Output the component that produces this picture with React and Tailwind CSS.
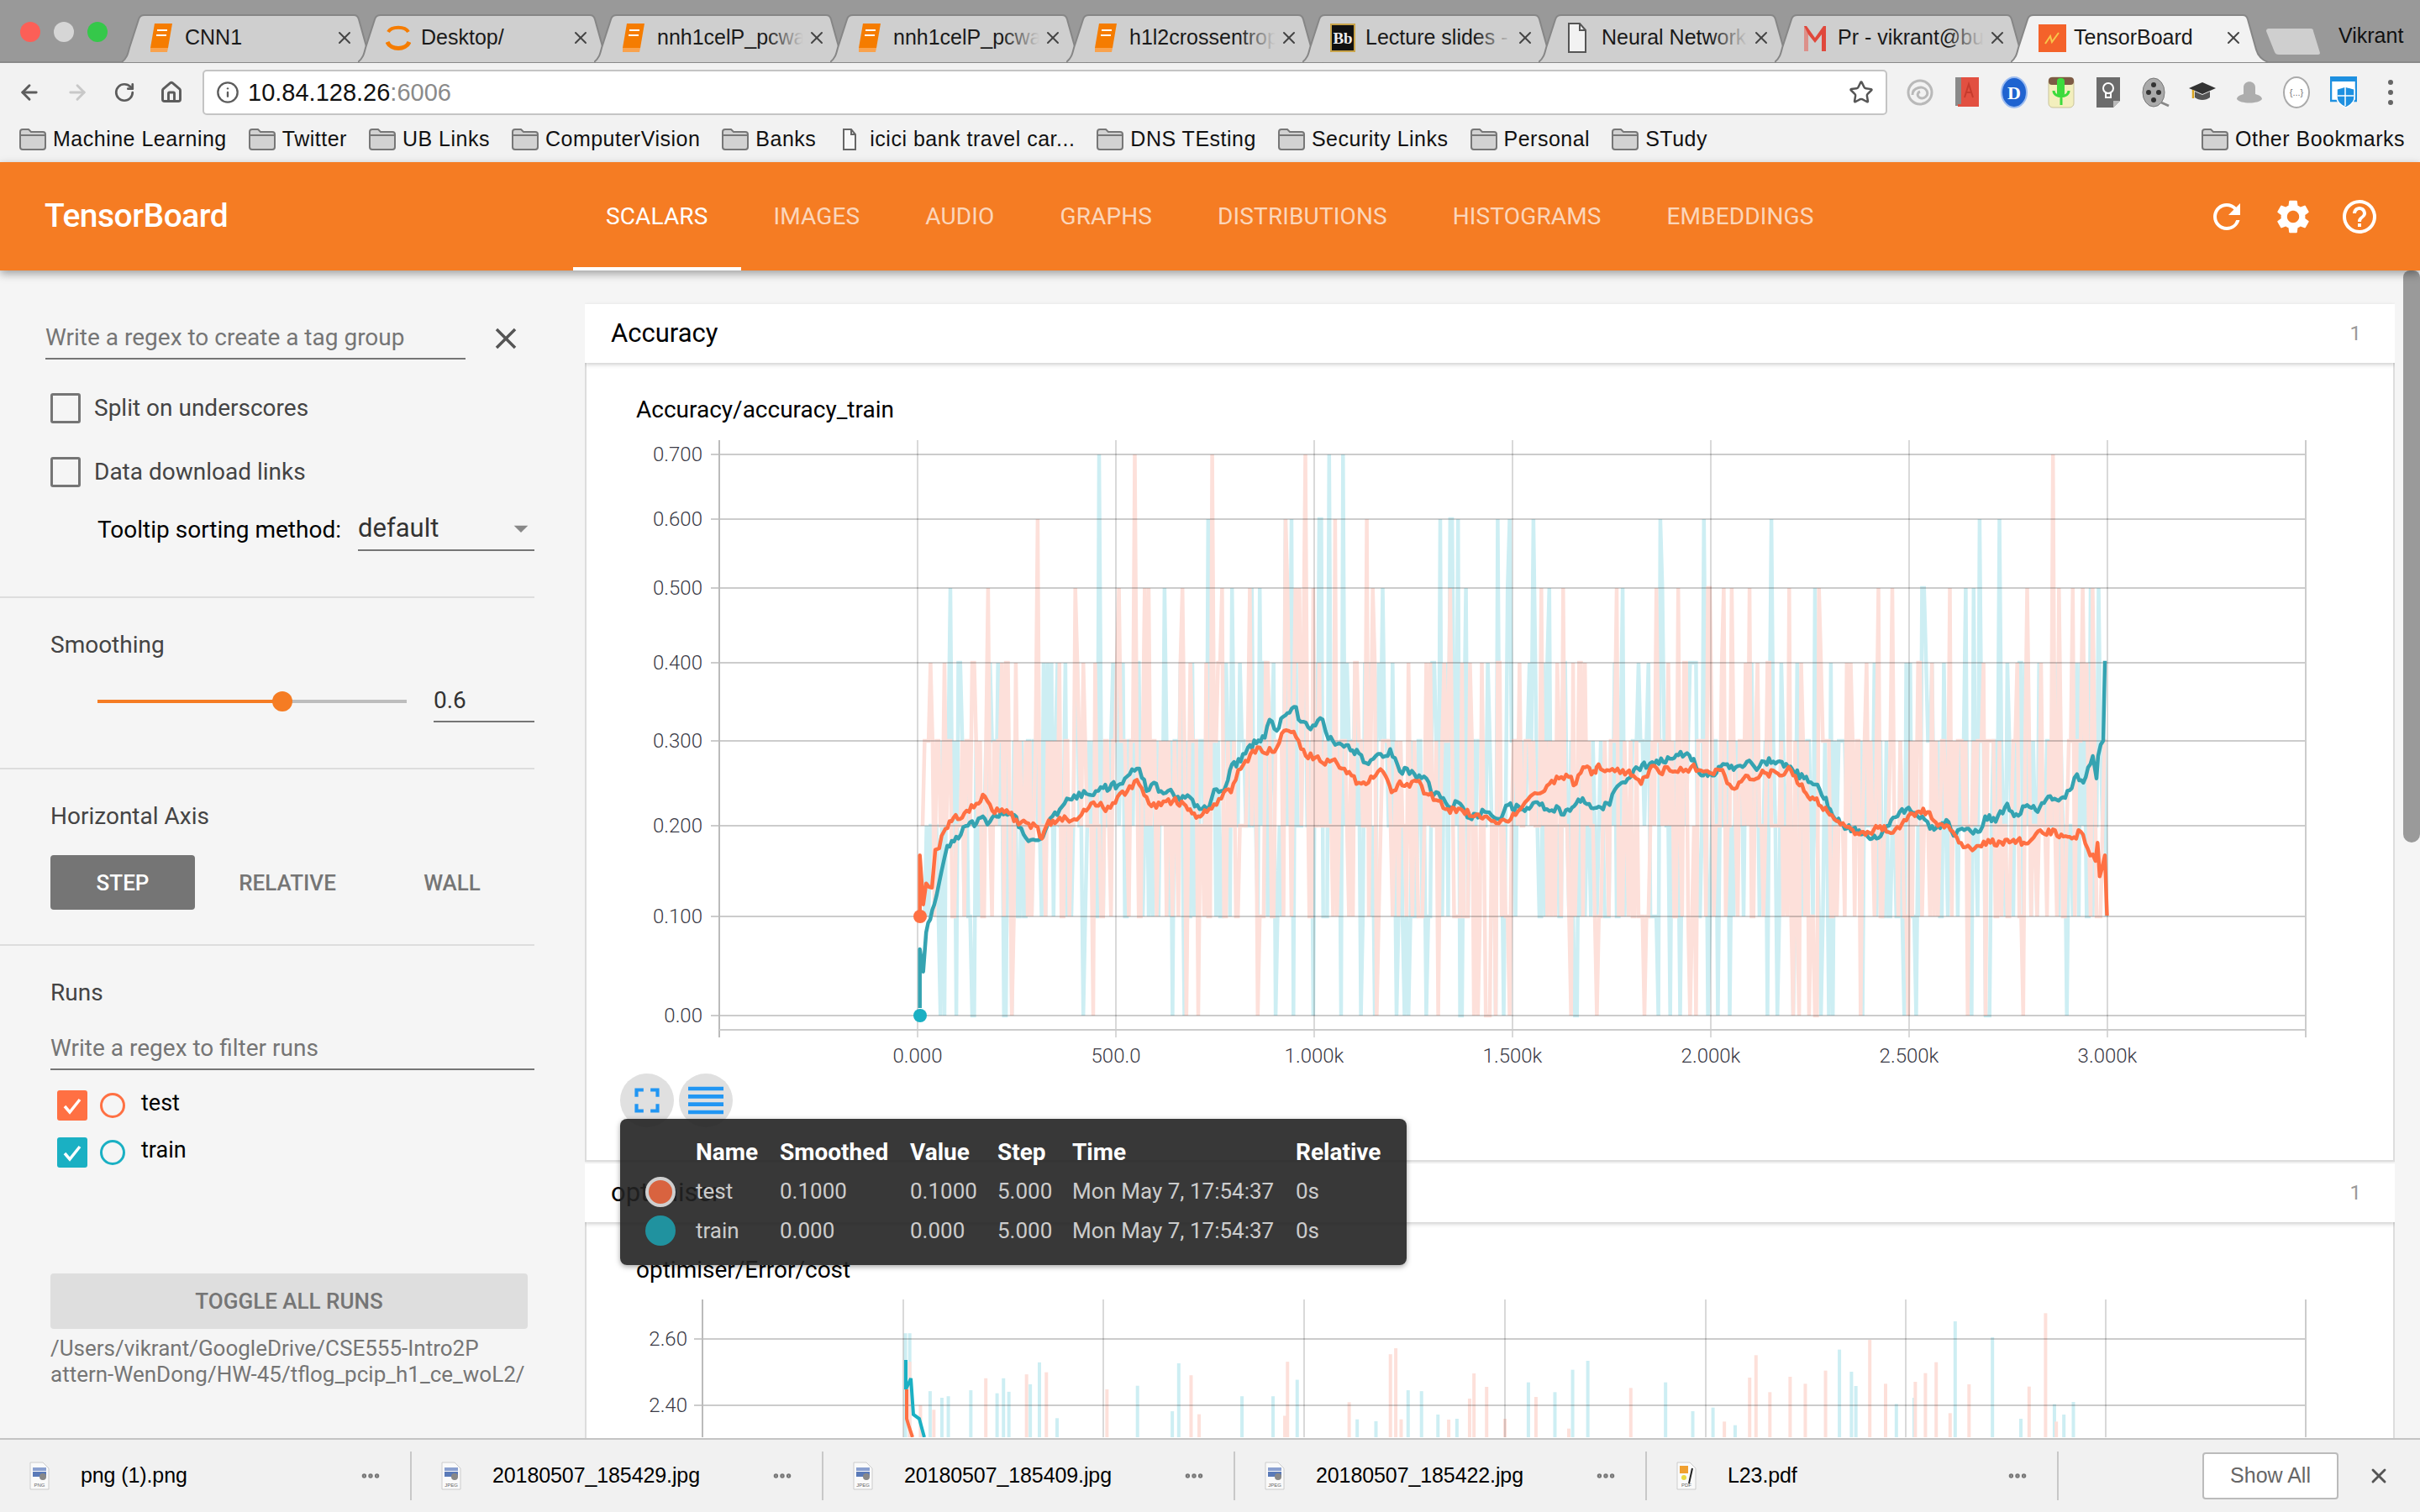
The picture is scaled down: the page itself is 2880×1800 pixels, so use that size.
import { ArrowLeft, ArrowRight, RotateCw, Home, Star, Info, X, MoreHorizontal } from 'lucide-react'
import { MdRefresh, MdSettings, MdHelpOutline, MdClose, MdFullscreen, MdReorder, MdArrowDropDown } from 'react-icons/md'

// small seeded random so the noisy chart data stays the same on each render
function seeded(seed) {
  let a = seed
  return () => {
    a |= 0; a = (a + 0x6d2b79f5) | 0
    let t = Math.imul(a ^ (a >>> 15), 1 | a)
    t = (t + Math.imul(t ^ (t >>> 7), 61 | t)) ^ t
    return ((t ^ (t >>> 14)) >>> 0) / 4294967296
  }
}

const Z6 = ([x, y]) => [1000 + x / 1.742, 700 + y / 3]
const Z7 = ([x, y]) => [1900 + x / 1.6, 700 + y / 3]

const testPts = [
  ...[[165,1170],[165,955],[172,1130],[178,1055],[190,1070],[197,935],[205,930],[210,885],[218,860],[235,820],[248,825],[262,795],[282,770],[300,745],[315,795],[335,790],[350,805],[370,845],[385,838],[405,850],[418,895],[432,830],[445,840],[465,815],[480,830],[500,810],[525,765],[545,785],[560,785],[575,745],[595,725],[610,690],[625,715],[640,770],[655,785],[670,762],[690,760],[712,770],[725,790],[742,815],[760,800],[780,775],[795,730],[810,730],[825,650],[845,620],[855,580],[870,570],[880,590],[905,570],[920,510],[935,515],[950,545],[965,600],[985,605],[1000,625],[1020,615],[1040,645],[1060,670],[1075,695],[1095,695],[1115,655],[1130,670],[1143,730],[1160,690],[1180,710],[1195,690],[1215,735],[1240,760],[1260,790],[1290,795],[1310,815],[1340,815],[1360,840],[1385,835],[1410,790],[1430,745],[1455,730],[1470,700],[1490,680],[1510,675],[1525,700],[1540,640],[1566,660]].map(Z6),
  ...[[0,640],[20,650],[35,655],[50,650],[70,670],[85,700],[105,635],[120,660],[135,640],[150,655],[165,655],[180,640],[195,650],[215,660],[235,650],[258,715],[280,680],[300,685],[320,660],[345,662],[370,650],[395,725],[415,755],[440,800],[465,845],[500,880],[520,875],[540,850],[560,875],[590,830],[610,800],[630,800],[650,850],[670,850],[690,910],[720,930],[750,910],[790,905],[825,905],[845,865],[885,880],[905,895],[922,870],[935,930],[950,975],[954,910],[958,1030],[968,955],[972,1170]].map(Z7),
]

const trainPts = [
  ...[[165,1500],[165,1290],[172,1370],[178,1230],[195,1130],[210,1010],[222,920],[245,895],[260,850],[300,825],[305,845],[320,810],[360,810],[380,880],[395,900],[420,890],[440,815],[460,780],[485,740],[510,735],[525,740],[545,715],[580,700],[600,665],[620,645],[635,725],[650,695],[665,725],[685,720],[705,760],[720,740],[745,790],[765,780],[775,720],[795,725],[812,630],[830,620],[845,570],[880,535],[890,470],[905,510],[918,460],[945,425],[950,470],[975,505],[1000,470],[1012,540],[1040,560],[1075,590],[1090,625],[1110,600],[1135,600],[1140,575],[1160,655],[1175,645],[1195,680],[1215,680],[1230,740],[1250,750],[1260,780],[1285,770],[1300,820],[1340,800],[1365,825],[1385,775],[1415,790],[1445,765],[1465,790],[1490,785],[1500,810],[1530,755],[1566,785]].map(Z6),
  ...[[0,785],[25,775],[35,720],[55,695],[75,640],[110,630],[140,610],[160,585],[185,610],[195,660],[220,670],[245,630],[265,640],[295,625],[305,650],[320,620],[345,620],[365,640],[395,680],[425,720],[445,790],[465,845],[500,865],[525,895],[545,870],[565,820],[590,790],[620,815],[635,860],[670,835],[680,885],[700,865],[730,870],[740,815],[760,835],[782,770],[795,815],[820,775],[840,800],[860,745],[880,760],[905,715],[915,665],[927,695],[945,600],[952,680],[955,600],[965,545],[968,260]].map(Z7),
]

function jagged(pts, seed, amp) {
  const r = seeded(seed)
  let out = [pts[0]]
  for (let i = 1; i < pts.length; i++) {
    const [x0, y0] = pts[i - 1]
    const [x1, y1] = pts[i]
    const n = Math.floor((x1 - x0) / 2.4)
    for (let k = 1; k < n; k++) {
      const t = k / n
      out.push([x0 + (x1 - x0) * t, y0 + (y1 - y0) * t + (r() - 0.5) * amp])
    }
    out.push([x1, y1])
  }
  return 'M' + out.map(p => p[0].toFixed(1) + ' ' + p[1].toFixed(1)).join('L')
}

const Y_AT = [1209, 1091, 983, 882, 789, 700, 618, 541]

function rawLine(seed, weights, peak) {
  const r = seeded(seed)
  const pts = []
  for (let x = 1098; x <= 2508; x += 2.36) {
    let u = r()
    let idx = 0
    while (idx < weights.length - 1 && u > weights[idx]) { u -= weights[idx]; idx++ }
    // the middle of the run has more high values
    if (x > 1480 && x < 1660 && r() < peak) idx = 4 + Math.floor(r() * 4)
    pts.push(x.toFixed(1) + ' ' + Y_AT[idx])
  }
  return 'M' + pts.join('L')
}

const rawTest = rawLine(11, [0.045, 0.22, 0.25, 0.27, 0.14, 0.058, 0.012, 0.005], 0.12)
const rawTrain = rawLine(29, [0.09, 0.2, 0.26, 0.27, 0.12, 0.04, 0.015, 0.005], 0.04)
const smoothTest = jagged(testPts, 5, 9)
const smoothTrain = jagged(trainPts, 8, 9)

const Z5 = ([x, y]) => [700 + x / 1.568, 1240 + y / 2.8]
const Z8 = ([x, y]) => [1700 + x / 1.329, 1500 + y / 3]
const teal2 = [
  ...[[592,975],[600,975],[638,1168],[660,1190],[672,1185],[714,1165],[775,1125],[763,1175],[785,1170],[825,1145],[842,1072],[875,1258],[1025,1150],[1102,1075],[1090,1235],[1220,1185],[1278,1185],[1323,1130],[1435,1262],[1470,1268],[1530,1165],[1555,1168]].map(Z5),
  ...[[15,555],[45,570],[158,440],[200,475],[228,395],[252,363],[375,440],[418,543],[450,530],[485,593],[650,323],[669,402],[676,453],[740,517],[768,495],[833,222],[892,279],[937,570],[990,518],[1005,555],[1020,510]].map(Z8),
]
const pink2 = [
  ...[[600,1070],[620,1215],[645,1230],[742,1125],[818,1112],[855,1105],[968,1162],[1125,1115],[1140,1245],[1305,1070],[1300,1250],[1420,1205],[1497,1045],[1507,1025],[1517,1262]].map(Z5),
  ...[[72,408],[65,498],[92,456],[32,573],[121,570],[170,492],[222,605],[320,460],[468,580],[508,423],[518,343],[540,475],[572,420],[596,445],[628,398],[698,288],[723,445],[770,438],[786,407],[803,368],[825,550],[855,447],[950,455],[976,193],[993,580]].map(Z8),
]

const tabs = [
  { title: 'CNN1', icon: 'book' },
  { title: 'Desktop/', icon: 'spin' },
  { title: 'nnh1celP_pcwa_reg', icon: 'book' },
  { title: 'nnh1celP_pcwa_reg', icon: 'book' },
  { title: 'h1l2crossentropy', icon: 'book' },
  { title: 'Lecture slides - CSE', icon: 'bb' },
  { title: 'Neural Networks', icon: 'doc' },
  { title: 'Pr - vikrant@buffalo', icon: 'gmail' },
  { title: 'TensorBoard', icon: 'tb', active: true },
]

function TabIcon({ kind }) {
  if (kind === 'book') return (
    <svg width="28" height="36" viewBox="0 0 28 36"><path d="M6 1h21l-5 29H1z" fill="#f57c00" /><path d="M1 30h21l-1 5H1z" fill="#f9a24d" /><path d="M9 9h12M8 15h12" stroke="#fff" strokeWidth="2" /></svg>
  )
  if (kind === 'spin') return (
    <svg width="30" height="36" viewBox="0 0 30 36" fill="none" stroke="#f57c00" strokeWidth="4"><path d="M3 11C7 4 23 4 27 11" /><path d="M2 23C6 33 24 33 28 23" strokeWidth="5" /></svg>
  )
  if (kind === 'bb') return (
    <svg width="30" height="36" viewBox="0 0 30 36"><rect x="1" y="2" width="28" height="32" fill="#111" stroke="#c9a44a" strokeWidth="2" /><text x="15" y="25" textAnchor="middle" fontSize="19" fontWeight="700" fontFamily="Liberation Serif, serif" fill="#eee">Bb</text></svg>
  )
  if (kind === 'doc') return (
    <svg width="26" height="38" viewBox="0 0 26 38" fill="#f2f2f2" stroke="#555" strokeWidth="2"><path d="M3 2h13l7 8v26H3z" /><path d="M16 2v8h7" fill="none" /></svg>
  )
  if (kind === 'gmail') return (
    <svg width="30" height="36" viewBox="0 0 30 36"><path d="M2 4v30h5V14l8 10 8-10v20h5V4h-3L15 18 5 4z" fill="#e0483c" /><path d="M7 14v20H2V4z" fill="#d8d8d8" opacity=".5" /></svg>
  )
  return (
    <svg width="33" height="33" viewBox="0 0 33 33"><rect width="33" height="33" fill="#f4622a" /><path d="M8 23l6-9 2 7 8-11" fill="none" stroke="#f8c64a" strokeWidth="2" /></svg>
  )
}

function Tab({ title, icon, active }) {
  return (
    <div className={`relative h-[56px] w-[306px] -mr-[25px] shrink-0 ${active ? 'z-10' : ''}`}>
      <svg className="absolute inset-0" width="306" height="58" viewBox="0 0 306 58">
        <path d="M0 57C6 52 7 48 9 40L20 6C21 2 23 1 27 1H276C279 1 281 2 282 6L292 42C294 49 298 54 306 57" fill={active ? '#f2f2f2' : '#cfcfcf'} stroke="#868686" strokeWidth="2" />
      </svg>
      <div className="relative flex items-center h-full pl-[33px] text-[25px] text-[#1a1a1a]">
        <div className="w-[42px] shrink-0"><TabIcon kind={icon} /></div>
        <div className="relative w-[174px] overflow-hidden whitespace-nowrap">
          {title}
          {!active && <div className="absolute right-0 top-0 bottom-0 w-[44px] bg-gradient-to-r from-transparent to-[#cfcfcf]"></div>}
        </div>
        <X className="ml-[4px] text-[#444]" size={24} strokeWidth={2} />
      </div>
    </div>
  )
}

function FolderIcon() {
  return (
    <svg width="32" height="26" viewBox="0 0 32 26"><path d="M1 4C1 2 2 1 4 1h7l3 3h14c2 0 3 1 3 3v15c0 2-1 3-3 3H4c-2 0-3-1-3-3z" fill="#d2d2d2" stroke="#777" strokeWidth="2" /><path d="M1 8h30" stroke="#777" strokeWidth="2" /></svg>
  )
}

function PageIcon() {
  return (
    <svg width="18" height="26" viewBox="0 0 18 26" fill="#f7f7f7" stroke="#666" strokeWidth="2"><path d="M2 1h9l5 6v18H2z" /><path d="M11 1v6h5" fill="none" /></svg>
  )
}

function Bookmark({ label, page }) {
  return (
    <div className={`flex items-center ${page ? 'gap-[15px] ml-[5px]' : 'gap-[8px]'}`}>
      {page ? <PageIcon /> : <FolderIcon />}
      <span className="text-[25px] tracking-[0.5px] text-[#111] whitespace-nowrap">{label}</span>
    </div>
  )
}

const extensions = [
  <svg key="a" width="34" height="34" viewBox="0 0 34 34" fill="none" stroke="#b9b9b9" strokeWidth="3"><circle cx="17" cy="17" r="14" /><path d="M8 20c0-9 13-12 17-5 3 6-4 11-9 8-3-2-2-6 1-7" /></svg>,
  <svg key="b" width="30" height="38" viewBox="0 0 30 38"><rect x="1" y="1" width="28" height="32" fill="#e25041" /><rect x="1" y="1" width="7" height="34" fill="#8a8a8a" /><rect x="4" y="33" width="25" height="3" fill="#e25041" /><path d="M12 25l5-16 5 16m-8-6h6" stroke="#c63b2d" strokeWidth="2" fill="none" /></svg>,
  <svg key="c" width="34" height="38" viewBox="0 0 34 38"><ellipse cx="17" cy="19" rx="15" ry="18" fill="#1f63d0" stroke="#9cbcf0" strokeWidth="2" /><text x="17" y="27" textAnchor="middle" fontSize="22" fontWeight="700" fontFamily="Liberation Serif, serif" fill="#fff">D</text></svg>,
  <svg key="d" width="32" height="38" viewBox="0 0 32 38"><rect x="1" y="1" width="30" height="36" rx="5" fill="#f3efbd" stroke="#c9c39a" /><rect x="1" y="1" width="30" height="9" rx="4" fill="#7d5a45" /><rect x="11" y="2" width="9" height="22" rx="4" fill="#3ddb3d" /><path d="M7 17c0 9 18 9 18 0M16 25v9" stroke="#3ddb3d" strokeWidth="3" fill="none" /></svg>,
  <svg key="e" width="32" height="38" viewBox="0 0 32 38"><path d="M2 1h28v28l-8 8H2z" fill="#6c6c6c" /><path d="M22 37v-8h8z" fill="#bbb" /><circle cx="16" cy="14" r="6" fill="none" stroke="#fff" strokeWidth="2" /><path d="M13 20h6v5h-6z" fill="none" stroke="#fff" strokeWidth="2" /></svg>,
  <svg key="f" width="34" height="38" viewBox="0 0 34 38"><ellipse cx="15" cy="19" rx="13" ry="17" fill="#aaa" stroke="#777" /><circle cx="15" cy="10" r="3" fill="#333" /><circle cx="15" cy="28" r="3" fill="#333" /><circle cx="9" cy="19" r="3" fill="#333" /><circle cx="21" cy="19" r="3" fill="#333" /><path d="M24 31l9 4" stroke="#888" strokeWidth="3" /></svg>,
  <svg key="g" width="34" height="30" viewBox="0 0 34 30"><path d="M17 3L33 10 17 17 1 10z" fill="#333" /><path d="M8 14v7c5 4 13 4 18 0v-7l-9 4z" fill="#555" /><path d="M6 12v10" stroke="#d9a520" strokeWidth="2.5" /></svg>,
  <svg key="h" width="32" height="28" viewBox="0 0 32 28"><path d="M9 16V8c0-9 14-9 14 0v8c4 1 8 3 8 6-4 6-26 6-30 0 0-3 4-5 8-6z" fill="#adadad" /></svg>,
  <div key="i" className="w-[32px] h-[38px] rounded-[50%] border-2 border-[#aaa] bg-white flex items-center justify-center text-[11px] text-[#777]">{'{...}'}</div>,
  <svg key="j" width="32" height="38" viewBox="0 0 32 38"><rect x="1" y="1" width="30" height="28" fill="#fff" stroke="#1e90e0" strokeWidth="2.5" /><rect x="1" y="1" width="30" height="5" fill="#1e90e0" /><path d="M8 15l10-3 11 3v10c0 6-6 10-10 12-5-2-11-6-11-12z" fill="#1e90e0" stroke="#fff" strokeWidth="1.5" /><path d="M18 13v22M9 23h19" stroke="#fff" strokeWidth="1.5" /></svg>,
]

function TabBar() {
  return (
    <div className="relative z-20 h-[73px] shrink-0 bg-[#999999] flex items-end pl-[24px] font-['Liberation_Sans',Arial,sans-serif]">
      <div className="flex gap-[16px] self-start mt-[26px] w-[104px] mr-[17px] shrink-0">
        <span className="w-[24px] h-[24px] rounded-full bg-[#fc5f57]"></span>
        <span className="w-[24px] h-[24px] rounded-full bg-[#d6d6d6]"></span>
        <span className="w-[24px] h-[24px] rounded-full bg-[#35c84a]"></span>
      </div>
      <div className="flex items-end">
        {tabs.map((t, i) => <Tab key={i} {...t} />)}
      </div>
      <svg className="self-start mt-[33px] ml-[22px] shrink-0" width="66" height="32" viewBox="0 0 66 32"><path d="M4 1h50c2 0 3 1 3 3l8 26c0 1-1 2-2 2H16c-3 0-4-1-5-3L1 4c0-2 1-3 3-3z" fill="#cfcfcf" /></svg>
      <div className="self-start mt-[24px] ml-[21px] text-[25px] text-[#111]">Vikrant</div>
    </div>
  )
}

function Toolbar() {
  return (
    <div className="h-[120px] shrink-0 bg-[#f2f2f2] border-t-2 border-[#8a8a8a] font-['Liberation_Sans',Arial,sans-serif]">
      <div className="flex items-center h-[70px] text-[#5c5c5c]">
        <div className="w-[241px] shrink-0 flex items-center pl-[21px] gap-[29px]">
          <ArrowLeft size={28} strokeWidth={2.5} />
          <ArrowRight size={28} strokeWidth={2.5} className="text-[#c8c8c8]" />
          <RotateCw size={26} strokeWidth={2.5} />
          <Home size={28} strokeWidth={2.5} />
        </div>
        <div className="w-[2005px] h-[54px] shrink-0 bg-white border-2 border-[#c4c4c4] rounded-[5px] flex items-center pl-[14px] pr-[14px]">
          <Info size={28} strokeWidth={2} />
          <span className="ml-[10px] text-[29px] text-[#111] pt-[2px]">10.84.128.26<span className="text-[#8a8a8a]">:6006</span></span>
          <Star size={30} strokeWidth={2} className="ml-auto text-[#555]" />
        </div>
        <div className="flex items-center ml-[11px]">
          {extensions.map((e, i) => <div key={i} className="w-[56px] h-[40px] flex items-center justify-center shrink-0">{e}</div>)}
          <div className="w-[56px] flex flex-col items-center gap-[6px]">
            <span className="w-[6px] h-[6px] rounded-full bg-[#666]"></span>
            <span className="w-[6px] h-[6px] rounded-full bg-[#666]"></span>
            <span className="w-[6px] h-[6px] rounded-full bg-[#666]"></span>
          </div>
        </div>
      </div>
      <div className="flex items-center h-[32px] mt-[5px] pl-[23px] pr-[18px] gap-[26px]">
        <Bookmark label="Machine Learning" />
        <Bookmark label="Twitter" />
        <Bookmark label="UB Links" />
        <Bookmark label="ComputerVision" />
        <Bookmark label="Banks" />
        <Bookmark label="icici bank travel car..." page />
        <Bookmark label="DNS TEsting" />
        <Bookmark label="Security Links" />
        <Bookmark label="Personal" />
        <Bookmark label="STudy" />
        <div className="ml-auto"><Bookmark label="Other Bookmarks" /></div>
      </div>
    </div>
  )
}

const navItems = ['SCALARS', 'IMAGES', 'AUDIO', 'GRAPHS', 'DISTRIBUTIONS', 'HISTOGRAMS', 'EMBEDDINGS']

function OrangeBar() {
  return (
    <div className="relative z-10 h-[129px] shrink-0 bg-[#f57c23] flex items-stretch shadow-[0_4px_10px_rgba(0,0,0,0.35)] text-white">
      <div className="w-[682px] shrink-0 pl-[53px] flex items-center text-[39px] font-medium tracking-[-0.5px]">TensorBoard</div>
      <div className="flex">
        {navItems.map((n, i) => (
          <div key={n} className={`px-[39px] flex items-center text-[28px] tracking-[0.13px] border-b-[4px] pt-[4px] ${i === 0 ? 'border-white text-white' : 'border-transparent text-white/70'}`}>{n}</div>
        ))}
      </div>
      <div className="ml-auto flex items-center gap-[31px] pr-[48px]">
        <MdRefresh size={48} />
        <MdSettings size={48} />
        <MdHelpOutline size={48} />
      </div>
    </div>
  )
}

function Checkbox({ label }) {
  return (
    <div className="flex items-center gap-[16px] h-[36px] ml-[60px]">
      <span className="w-[36px] h-[36px] border-[3px] border-[#757575] rounded-[3px]"></span>
      <span className="text-[#444]">{label}</span>
    </div>
  )
}

function RunRow({ label, bg, border, className }) {
  return (
    <div className={`flex items-center ml-[68px] h-[36px] ${className}`}>
      <span className={`w-[36px] h-[36px] rounded-[3px] flex items-center justify-center ${bg}`}>
        <svg width="28" height="28" viewBox="0 0 28 28" fill="none" stroke="#fff" strokeWidth="3.5"><path d="M5 15l6 7L23 7" /></svg>
      </span>
      <span className={`ml-[15px] w-[30px] h-[30px] rounded-full border-[3px] ${border}`}></span>
      <span className="ml-[19px] text-[27px] text-black pb-[6px]">{label}</span>
    </div>
  )
}

function Sidebar() {
  return (
    <div className="w-[696px] shrink-0 overflow-hidden text-[28px] leading-[32px] text-[#444]">
      <div className="w-[636px] h-[390px] border-b-2 border-[#dddddd] pt-[55px]">
        <div className="flex items-center ml-[54px]">
          <div className="w-[500px] h-[51px] border-b-2 border-[#757575] flex items-center text-[#757575] whitespace-nowrap">Write a regex to create a tag group</div>
          <MdClose size={42} className="ml-[27px] text-[#555] shrink-0" />
        </div>
        <div className="mt-[40px]"><Checkbox label="Split on underscores" /></div>
        <div className="mt-[40px]"><Checkbox label="Data download links" /></div>
        <div className="flex items-center mt-[26px] ml-[116px]">
          <span className="w-[310px] text-black whitespace-nowrap">Tooltip sorting method:</span>
          <div className="w-[210px] h-[50px] border-b-2 border-[#757575] flex items-center justify-between text-[31px] pb-[2px] text-[#333]">
            <span>default</span>
            <MdArrowDropDown size={40} className="text-[#888] -mr-[4px]" />
          </div>
        </div>
      </div>
      <div className="w-[636px] h-[204px] border-b-2 border-[#dddddd] pt-[40px]">
        <div className="ml-[60px]">Smoothing</div>
        <div className="flex items-center ml-[116px] mt-[25px]">
          <div className="relative w-[368px] h-[4px] bg-[#bdbdbd]">
            <div className="h-full w-[220px] bg-[#f57c23]"></div>
            <div className="absolute left-[208px] -top-[10px] w-[24px] h-[24px] rounded-full bg-[#f57c23]"></div>
          </div>
          <div className="ml-[32px] w-[120px] h-[51px] border-b-2 border-[#757575] flex items-center text-[#333]">0.6</div>
        </div>
      </div>
      <div className="w-[636px] h-[210px] border-b-2 border-[#dddddd] pt-[40px]">
        <div className="ml-[60px]">Horizontal Axis</div>
        <div className="flex items-center ml-[60px] mt-[30px] h-[65px] text-[26px] font-medium">
          <div className="w-[172px] h-full rounded-[4px] bg-[#757575] text-white flex items-center justify-center">STEP</div>
          <div className="w-[220px] text-center text-[#757575]">RELATIVE</div>
          <div className="w-[172px] text-center text-[#757575]">WALL</div>
        </div>
      </div>
      <div className="w-[636px] pt-[40px]">
        <div className="ml-[60px]">Runs</div>
        <div className="ml-[60px] mt-[26px] h-[50px] border-b-2 border-[#757575] flex items-center text-[#757575]">Write a regex to filter runs</div>
        <RunRow className="mt-[24px]" label="test" bg="bg-[#ff7043]" border="border-[#ff7043]" />
        <RunRow className="mt-[20px]" label="train" bg="bg-[#1ab0c3]" border="border-[#1ab0c3]" />
        <div className="ml-[60px] mt-[126px] w-[568px] h-[66px] rounded-[4px] bg-[#dedede] text-[#757575] text-[26px] flex items-center justify-center font-medium">TOGGLE ALL RUNS</div>
        <div className="ml-[60px] mt-[8px] text-[26px] text-[#757575] leading-[31px] whitespace-nowrap">
          <div>/Users/vikrant/GoogleDrive/CSE555-Intro2P</div>
          <div>attern-WenDong/HW-45/tflog_pcip_h1_ce_woL2/</div>
        </div>
      </div>
    </div>
  )
}

const gridH1 = [541, 618, 700, 789, 882, 983, 1091, 1209]
const yLabels1 = ['0.700', '0.600', '0.500', '0.400', '0.300', '0.200', '0.100', '0.00']
const gridV1 = [1092, 1328, 1564, 1800, 2036, 2272, 2508]
const xLabels1 = ['0.000', '500.0', '1.000k', '1.500k', '2.000k', '2.500k', '3.000k']

function AccuracyChart() {
  return (
    <svg className="block mt-[20px]" width="2150" height="750" viewBox="698 524 2150 750" fontFamily="Roboto, sans-serif" fontWeight="300" fontSize="24" fill="#3a3a46">
      <path d={rawTrain} fill="none" stroke="#cdeef3" strokeWidth="4.5" />
      <path d={rawTest} fill="none" stroke="#fde0da" strokeWidth="4.5" />
      {gridH1.map(y => <line key={y} x1="846" x2="2744" y1={y} y2={y} stroke="rgba(0,0,0,0.2)" strokeWidth="2" />)}
      {gridV1.map(x => <line key={x} x1={x} x2={x} y1="524" y2="1235" stroke="rgba(0,0,0,0.2)" strokeWidth="1.5" />)}
      <line x1="856" x2="856" y1="524" y2="1235" stroke="#bbb" strokeWidth="2" />
      <line x1="2744" x2="2744" y1="524" y2="1235" stroke="#ccc" strokeWidth="2" />
      <line x1="856" x2="2744" y1="1226" y2="1226" stroke="#ccc" strokeWidth="2" />
      <path d={smoothTrain} fill="none" stroke="#35a3b1" strokeWidth="4.5" strokeLinejoin="round" />
      <path d={smoothTest} fill="none" stroke="#ff7043" strokeWidth="4.5" strokeLinejoin="round" />
      <circle cx="1095" cy="1091" r="8" fill="#ff7043" />
      <circle cx="1095" cy="1209" r="8" fill="#1ab0c3" />
      {gridH1.map((y, i) => <text key={y} x="836" y={y + 8} textAnchor="end">{yLabels1[i]}</text>)}
      {gridV1.map((x, i) => <text key={x} x={x} y="1265" textAnchor="middle">{xLabels1[i]}</text>)}
    </svg>
  )
}

const gridV2 = [1075, 1313, 1552, 1791, 2030, 2268, 2506]

function CostChart() {
  return (
    <svg className="block mt-[11px]" width="2150" height="172" viewBox="698 1540 2150 172" fontFamily="Roboto, sans-serif" fontWeight="300" fontSize="24" fill="#3a3a46">
      {teal2.map(([x, y], i) => <rect key={i} x={x - 2} y={y} width="4" height={1712 - y} fill="#cdeef3" />)}
      {pink2.map(([x, y], i) => <rect key={i} x={x - 2} y={y} width="4" height={1712 - y} fill="#fde0da" />)}
      {[1595, 1674].map(y => <line key={y} x1="826" x2="2744" y1={y} y2={y} stroke="rgba(0,0,0,0.2)" strokeWidth="2" />)}
      {gridV2.map(x => <line key={x} x1={x} x2={x} y1="1548" y2="1712" stroke="rgba(0,0,0,0.2)" strokeWidth="1.5" />)}
      <line x1="836" x2="836" y1="1548" y2="1712" stroke="#bbb" strokeWidth="2" />
      <line x1="2744" x2="2744" y1="1548" y2="1712" stroke="#ccc" strokeWidth="2" />
      <path d="M1078 1620L1078 1655L1084 1642L1087 1685L1094 1690L1100 1712" fill="none" stroke="#1ab0c3" strokeWidth="4" />
      <path d="M1079 1655L1079 1690L1082 1700L1086 1712" fill="none" stroke="#ff7043" strokeWidth="4" />
      <text x="818" y="1603" textAnchor="end">2.60</text>
      <text x="818" y="1682" textAnchor="end">2.40</text>
    </svg>
  )
}

function CardHeader({ title }) {
  return (
    <div className="relative h-[70px] bg-white shadow-[0_2px_5px_rgba(0,0,0,0.2)] flex items-center justify-between pl-[31px] pr-[40px]">
      <span className="text-[31px] text-black">{title}</span>
      <span className="text-[24px] text-[#999]">1</span>
    </div>
  )
}

function Content() {
  return (
    <div className="w-[2154px] shrink-0 overflow-hidden pt-[40px]">
      <CardHeader title="Accuracy" />
      <div className="bg-white border-x-2 border-b-2 border-[#dddddd] h-[951px]">
        <div className="pl-[59px] pt-[40px] text-[28px] leading-[32px] text-black">Accuracy/accuracy_train</div>
        <AccuracyChart />
        <div className="flex gap-[6px] pl-[40px] mt-[4px]">
          <div className="w-[64px] h-[64px] rounded-full bg-[#e0e0e0] flex items-center justify-center text-[#2196f3]"><MdFullscreen size={50} /></div>
          <div className="w-[64px] h-[64px] rounded-full bg-[#e0e0e0] flex items-center justify-center text-[#2196f3]"><MdReorder size={56} /></div>
        </div>
      </div>
      <div className="mt-[2px]">
        <CardHeader title="optimiser" />
      </div>
      <div className="bg-white border-x-2 border-[#dddddd] h-[400px]">
        <div className="pl-[59px] pt-[41px] text-[28px] leading-[32px] text-black">optimiser/Error/cost</div>
        <CostChart />
      </div>
    </div>
  )
}

const headRow = ['Name', 'Smoothed', 'Value', 'Step', 'Time', 'Relative']
const tipRows = [
  { color: 'bg-[#d9633f] border-[4px] border-[#cfcfcf]', cells: ['test', '0.1000', '0.1000', '5.000', 'Mon May 7, 17:54:37', '0s'] },
  { color: 'bg-[#20929f]', cells: ['train', '0.000', '0.000', '5.000', 'Mon May 7, 17:54:37', '0s'] },
]

function ChartTooltip() {
  return (
    <div className="absolute z-20 left-[738px] top-[1010px] w-[936px] h-[174px] rounded-[8px] bg-[#222222]/90 shadow-[0_2px_6px_rgba(0,0,0,0.35)] pt-[17px] text-[26px] text-[#cccccc] grid grid-cols-[90px_100px_155px_104px_89px_266px_auto] auto-rows-[46.5px] items-center whitespace-nowrap">
      <span></span>
      {headRow.map(h => <span key={h} className="text-[28px] font-bold text-white">{h}</span>)}
      {tipRows.map((r, i) => [
        <span key={'s' + i} className={`ml-[30px] w-[36px] h-[36px] rounded-full ${r.color}`}></span>,
        ...r.cells.map((c, k) => <span key={i + '-' + k}>{c}</span>),
      ])}
    </div>
  )
}

const downloads = [
  { name: 'png (1).png', tag: 'PNG' },
  { name: '20180507_185429.jpg', tag: 'JPEG' },
  { name: '20180507_185409.jpg', tag: 'JPEG' },
  { name: '20180507_185422.jpg', tag: 'JPEG' },
  { name: 'L23.pdf', tag: 'PDF' },
]

function FileIcon({ tag }) {
  return (
    <svg width="24" height="34" viewBox="0 0 24 34">
      <path d="M1 1h15l7 7v25H1z" fill="#fafafa" stroke="#ccc" />
      {tag === 'PDF'
        ? <g><rect x="4" y="5" width="10" height="9" fill="#f0a030" /><circle cx="9" cy="19" r="3" fill="#e8d840" /><path d="M19 8l-4 18" stroke="#222" strokeWidth="2" /></g>
        : <g><rect x="4" y="7" width="16" height="4" fill="#8aa0d0" /><rect x="4" y="12" width="16" height="6" fill="#5a7ab8" /><circle cx="16" cy="18" r="4" fill="#888" /></g>}
      <text x="12" y="30" textAnchor="middle" fontSize="6" fill="#666">{tag}</text>
    </svg>
  )
}

function DownloadBar() {
  return (
    <div className="relative z-10 h-[88px] shrink-0 bg-[#f1f1f1] border-t-2 border-[#c4c4c4] flex items-center font-['Liberation_Sans',Arial,sans-serif]">
      {downloads.map(d => (
        <div key={d.name} className="w-[490px] h-[58px] shrink-0 flex items-center border-r-2 border-[#c8c8c8]">
          <div className="w-[96px] pl-[35px] shrink-0"><FileIcon tag={d.tag} /></div>
          <span className="text-[25px] tracking-[-0.1px] text-black">{d.name}</span>
          <MoreHorizontal size={26} strokeWidth={3} className="ml-auto mr-[34px] text-[#777]" />
        </div>
      ))}
      <div className="ml-auto mr-[97px] w-[162px] h-[56px] bg-white border-2 border-[#bbbbbb] rounded-[4px] flex items-center justify-center text-[25px] text-[#666]">Show All</div>
      <X size={28} strokeWidth={2.5} className="absolute left-[2817px] text-[#555]" />
    </div>
  )
}

export default function App() {
  return (
    <div className="w-[2880px] h-[1800px] overflow-hidden flex flex-col bg-[#f5f5f5] font-['Roboto',sans-serif]">
      <TabBar />
      <Toolbar />
      <OrangeBar />
      <div className="relative flex flex-1 min-h-0 overflow-hidden">
        <Sidebar />
        <Content />
        <div className="w-[30px] shrink-0">
          <div className="ml-[10px] w-[20px] h-[681px] rounded-b-[10px] rounded-t-[8px] bg-[#9a9a9a]"></div>
        </div>
        <ChartTooltip />
      </div>
      <DownloadBar />
    </div>
  )
}
